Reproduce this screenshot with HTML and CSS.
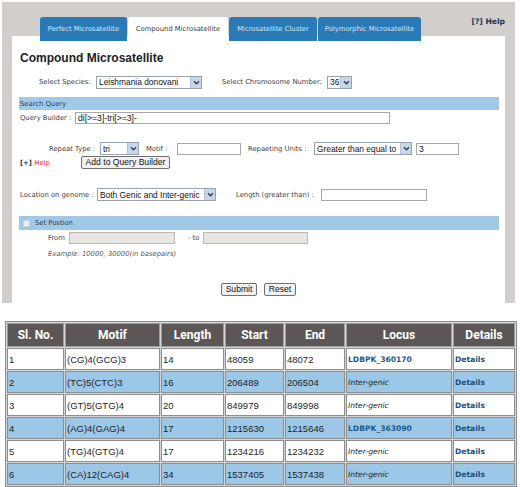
FILE: index.html
```html
<!DOCTYPE html>
<html lang="en">

<head>
    <meta charset="UTF-8">
    <meta name="viewport" content="width=device-width, initial-scale=1.0">
    <title>Compound Microsatellite</title>
    <link rel="stylesheet" href="styles.css">
</head>

<body>
    <div class="frame">
        <header class="topbar">
            <nav class="tabs">
                <div class="tab tab-perfect">Perfect Microsatellite</div>
                <div class="tab tab-compound active">Compound Microsatellite</div>
                <div class="tab tab-cluster">Microsatellite Cluster</div>
                <div class="tab tab-poly">Polymorphic Microsatellite</div>
            </nav>
            <div class="top-help">[?] Help</div>
        </header>

        <section class="panel">
            <h1 class="title">Compound Microsatellite</h1>

            <div class="row row-species">
                <span class="label label-species">Select Species:</span>
                <span class="sel sel-species"><span class="val">Leishmania donovani</span><span class="arr"><svg width="9" height="9" viewBox="0 0 9 9"><path d="M2 3.2l2.5 2.5 2.5-2.5" fill="none" stroke="#2c3e63" stroke-width="1.4"/></svg></span></span>
                <span class="label label-chrom">Select Chromosome Number:</span>
                <span class="sel sel-chrom"><span class="val">36</span><span class="arr"><svg width="9" height="9" viewBox="0 0 9 9"><path d="M2 3.2l2.5 2.5 2.5-2.5" fill="none" stroke="#2c3e63" stroke-width="1.4"/></svg></span></span>
            </div>

            <div class="bar bar-search">Search Query</div>

            <div class="row row-query">
                <span class="label label-query">Query Builder :</span>
                <span class="input input-query">di[&gt;=3]-tri[&gt;=3]-</span>
            </div>

            <div class="row row-repeat">
                <span class="label label-type">Repeat Type :</span>
                <span class="sel sel-type"><span class="val">tri</span><span class="arr"><svg width="9" height="9" viewBox="0 0 9 9"><path d="M2 3.2l2.5 2.5 2.5-2.5" fill="none" stroke="#2c3e63" stroke-width="1.4"/></svg></span></span>
                <span class="label label-motif">Motif :</span>
                <span class="input input-motif"></span>
                <span class="label label-units">Repaeting Units :</span>
                <span class="sel sel-units"><span class="val">Greater than equal to</span><span class="arr"><svg width="9" height="9" viewBox="0 0 9 9"><path d="M2 3.2l2.5 2.5 2.5-2.5" fill="none" stroke="#2c3e63" stroke-width="1.4"/></svg></span></span>
                <span class="input input-units">3</span>
            </div>

            <div class="row row-add">
                <span class="mini-help">[+] <span class="red">Help</span></span>
                <button class="btn btn-add">Add to Query Builder</button>
            </div>

            <div class="row row-location">
                <span class="label label-location">Location on genome :</span>
                <span class="sel sel-location"><span class="val">Both Genic and Inter-genic</span><span class="arr"><svg width="9" height="9" viewBox="0 0 9 9"><path d="M2 3.2l2.5 2.5 2.5-2.5" fill="none" stroke="#2c3e63" stroke-width="1.4"/></svg></span></span>
                <span class="label label-length">Length (greater than) :</span>
                <span class="input input-length"></span>
            </div>

            <div class="bar bar-position"><span class="check"></span>Set Postion</div>

            <div class="row row-from">
                <span class="label label-from">From</span>
                <span class="input input-off input-from"></span>
                <span class="label label-to">- to</span>
                <span class="input input-off input-to"></span>
            </div>

            <div class="example">Example: 10000, 30000(in basepairs)</div>

            <div class="row row-submit">
                <button class="btn btn-submit">Submit</button>
                <button class="btn btn-reset">Reset</button>
            </div>
        </section>
    </div>

    <table class="results">
        <colgroup>
            <col class="c-no"><col class="c-motif"><col class="c-len"><col class="c-start"><col class="c-end"><col class="c-locus"><col class="c-det">
        </colgroup>
        <thead>
            <tr>
                <th>Sl. No.</th><th>Motif</th><th>Length</th><th>Start</th><th>End</th><th>Locus</th><th>Details</th>
            </tr>
        </thead>
        <tbody>
            <tr>
                <td>1</td><td>(CG)4(GCG)3</td><td>14</td><td>48059</td><td>48072</td><td class="locus">LDBPK_360170</td><td class="det">Details</td>
            </tr>
            <tr class="alt">
                <td>2</td><td>(TC)5(CTC)3</td><td>16</td><td>206489</td><td>206504</td><td class="inter">Inter-genic</td><td class="det">Details</td>
            </tr>
            <tr>
                <td>3</td><td>(GT)5(GTG)4</td><td>20</td><td>849979</td><td>849998</td><td class="inter">Inter-genic</td><td class="det">Details</td>
            </tr>
            <tr class="alt">
                <td>4</td><td>(AG)4(GAG)4</td><td>17</td><td>1215630</td><td>1215646</td><td class="locus">LDBPK_363090</td><td class="det">Details</td>
            </tr>
            <tr>
                <td>5</td><td>(TG)4(GTG)4</td><td>17</td><td>1234216</td><td>1234232</td><td class="inter">Inter-genic</td><td class="det">Details</td>
            </tr>
            <tr class="alt">
                <td>6</td><td>(CA)12(CAG)4</td><td>34</td><td>1537405</td><td>1537438</td><td class="inter">Inter-genic</td><td class="det">Details</td>
            </tr>
        </tbody>
    </table>
</body>

</html>
```

FILE: styles.css
```css
* {
    box-sizing: border-box;
}

html, body {
    margin: 0;
    background-color: #ffffff;
    font-family: 'DejaVu Sans', Verdana, sans-serif;
    color: #333333;
}

/* grey frame round the search form */
.frame {
    margin: 2px 5px 0 2px;
    padding: 15px 10px 0 10px;
    background-color: #d2cecb;
}

.topbar {
    display: flex;
    justify-content: space-between;
    align-items: flex-start;
    margin-bottom: -5px;
    position: relative;
    z-index: 1;
}

.tabs {
    display: flex;
    gap: 1px;
    margin-left: 28px;
}

.tab {
    height: 24px;
    display: flex;
    align-items: center;
    justify-content: center;
    font-size: 6.8px;
    color: #d6e8f6;
    background-color: #2a7ab8;
    border-radius: 3px 3px 0 0;
}

.tab.active {
    background-color: #ffffff;
    color: #3a3a3a;
}

.tab-perfect { width: 87px; }
.tab-compound { width: 100px; }
.tab-cluster { width: 88px; }
.tab-poly { width: 103px; }

.top-help {
    font-size: 7.6px;
    font-weight: bold;
    color: #1e3550;
    line-height: 10px;
}

.panel {
    background-color: #ffffff;
    padding: 0 6px 7px 7px;
    display: flex;
    flex-direction: column;
}

.title {
    margin: 14px 0 0 1px;
    font-family: 'Liberation Sans', Arial, sans-serif;
    font-size: 12px;
    line-height: 16px;
    font-weight: bold;
    color: #222222;
}

.row {
    display: flex;
    align-items: center;
}

.row > * {
    flex-shrink: 0;
}

.label {
    font-size: 6.8px;
    color: #3c3c3c;
    white-space: nowrap;
}

/* fake selects */
.sel {
    display: flex;
    align-items: center;
    height: 13px;
    border: 1px solid #9aa3ad;
    background-color: #ffffff;
    font-family: 'Liberation Sans', Arial, sans-serif;
    font-size: 8.4px;
    color: #111111;
    padding-left: 2px;
}

.sel .val {
    flex: 1;
    white-space: nowrap;
    overflow: hidden;
}

.sel .arr {
    width: 11px;
    height: 11px;
    flex-shrink: 0;
    display: flex;
    align-items: center;
    justify-content: center;
    background-color: #c9d6e8;
    border-left: 1px solid #b4c2d6;
}

.input {
    display: flex;
    align-items: center;
    height: 12px;
    border: 1px solid #a8a8a8;
    background-color: #ffffff;
    font-family: 'Liberation Sans', Arial, sans-serif;
    font-size: 8.6px;
    color: #111111;
    padding-left: 2px;
}

.input-off {
    background-color: #e8e6e3;
    border-color: #bdbab6;
}

.bar {
    height: 13px;
    display: flex;
    align-items: center;
    padding-left: 1px;
    font-size: 6.8px;
    color: #2c3d52;
    background-color: #a2c8e8;
}

.row-species {
    margin-top: 9px;
    height: 14px;
    padding-left: 20px;
}

.label-species { width: 57px; }
.sel-species { width: 106px; }
.label-chrom { margin-left: 20px; width: 105px; }
.sel-chrom { width: 25px; }

.bar-search { margin-top: 8px; }

.row-query {
    margin-top: 2px;
    padding-left: 1px;
}

.label-query { width: 55px; }
.input-query { width: 315px; }

.row-repeat {
    margin-top: 18px;
    padding-left: 30px;
}

.label-type { width: 51px; }
.sel-type { width: 39px; }
.label-motif { margin-left: 7px; width: 31px; }
.input-motif { width: 64px; }
.label-units { margin-left: 7px; width: 66px; }
.sel-units { width: 98px; }
.input-units { width: 43px; margin-left: 4px; }

.row-add {
    margin-top: 1px;
    padding-left: 1px;
}

.mini-help {
    width: 61px;
    font-size: 6.8px;
    font-weight: bold;
    color: #333355;
}

.mini-help .red {
    color: #d8302f;
    font-weight: normal;
}

.btn {
    height: 13px;
    padding: 0;
    margin: 0;
    border: 1px solid #6f6f6f;
    border-radius: 2px;
    background-color: #f1f1f1;
    font-family: 'Liberation Sans', Arial, sans-serif;
    font-size: 8.6px;
    line-height: 11px;
    color: #111111;
    white-space: nowrap;
}

.btn-add { width: 89px; }
.btn-submit { width: 36px; }
.btn-reset { width: 32px; }

.row-location {
    margin-top: 19px;
    padding-left: 1px;
}

.label-location { width: 77px; }
.sel-location { width: 119px; }
.label-length { margin-left: 20px; width: 85px; }
.input-length { width: 106px; }

.bar-position {
    margin-top: 15px;
    height: 14px;
    padding-left: 4px;
}

.check {
    width: 7px;
    height: 7px;
    margin-right: 5px;
    border: 1px solid #c7d3de;
    background-color: #e9eef3;
}

.row-from {
    margin-top: 2px;
    padding-left: 29px;
}

.label-from { width: 21px; }
.input-from { width: 106px; }
.label-to { margin-left: 13px; width: 15px; }
.input-to { width: 105px; }

.example {
    margin-top: 5px;
    padding-left: 29px;
    height: 10px;
    line-height: 10px;
    font-size: 6.8px;
    font-style: italic;
    color: #555555;
}

.row-submit {
    margin-top: 24px;
    padding-left: 202px;
    gap: 7px;
}

/* results table */
.results {
    margin: 18px 0 0 5px;
    width: 511px;
    table-layout: fixed;
    border: 1px solid #8c8c8c;
    border-spacing: 1px;
    background-color: #d6d6d6;
    font-family: 'Liberation Sans', Arial, sans-serif;
    font-size: 9.5px;
    color: #1e1e1e;
}

.c-no { width: 57px; }
.c-motif { width: 95px; }
.c-len { width: 63px; }
.c-start { width: 59px; }
.c-end { width: 60px; }
.c-locus { width: 106px; }
.c-det { width: 62px; }

.results th {
    height: 24px;
    padding: 0;
    background-color: #5b5757;
    border: 1px solid #9e9e9e;
    font-family: Roboto, sans-serif;
    font-size: 12px;
    font-weight: bold;
    color: #ffffff;
}

.results td {
    height: 22px;
    padding: 0 0 0 1px;
    background-color: #ffffff;
    border: 1px solid #8e8e8e;
    white-space: nowrap;
}

.results tr.alt td {
    background-color: #9cc7e7;
}

.results td.locus {
    font-family: 'DejaVu Sans', Verdana, sans-serif;
    font-size: 7.6px;
    font-weight: bold;
    color: #1c5a88;
}

.results td.inter {
    font-family: 'DejaVu Sans', Verdana, sans-serif;
    font-size: 7.6px;
    font-style: italic;
}

.results td.det {
    font-family: 'DejaVu Sans', Verdana, sans-serif;
    font-size: 7.6px;
    font-weight: bold;
    color: #1c4f7c;
}
```
